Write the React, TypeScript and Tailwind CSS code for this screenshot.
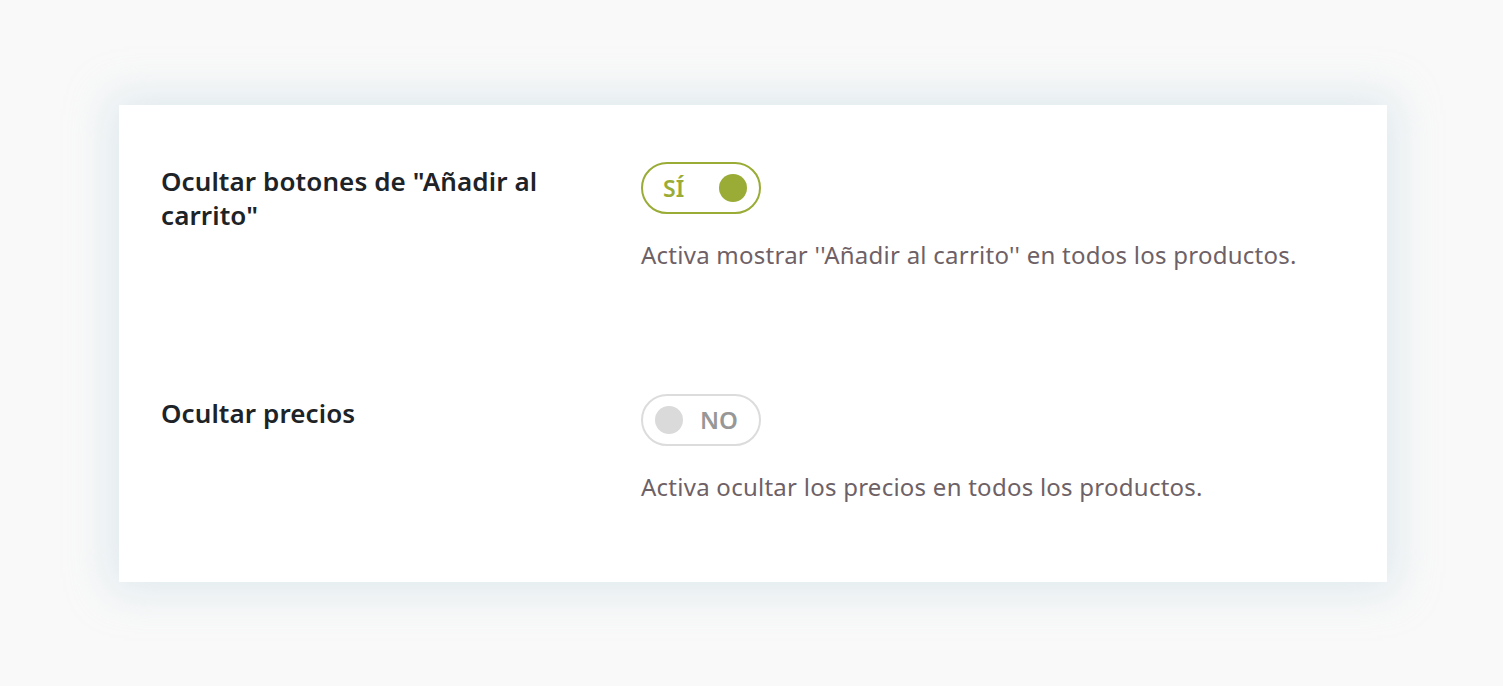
const Toggle = ({ on }: { on: boolean }) =>
  on ? (
    <div className="flex h-[52px] w-[120px] items-center justify-between rounded-full border-2 border-[#9aac36] pl-[20px] pr-[12px]">
      <span className="text-[23px] font-semibold text-[#9aac36]">SÍ</span>
      <span className="h-[28px] w-[28px] rounded-full bg-[#9aac36]" />
    </div>
  ) : (
    <div className="flex h-[52px] w-[120px] items-center justify-between rounded-full border-2 border-[#dcdcdc] pl-[12px] pr-[21px]">
      <span className="h-[28px] w-[28px] rounded-full bg-[#dadada]" />
      <span className="text-[24px] font-semibold text-[#979797]">NO</span>
    </div>
  );

const Row = ({ title, on, desc }: { title: string; on: boolean; desc: string }) => (
  <div className="grid grid-cols-[480px_1fr]">
    <h3 className="w-[420px] pt-[2px] text-[26px] font-semibold leading-[34px] tracking-[0.1px] text-[#1d2327]">{title}</h3>
    <div>
      <Toggle on={on} />
      <p className="mt-[26px] text-[24px] leading-[30px] tracking-[0.25px] text-[#6e6166]">{desc}</p>
    </div>
  </div>
);

export default function App() {
  return (
    <div className="min-h-[686px] bg-[#f9f9f9] pl-[119px] pr-[116px] pt-[105px] pb-[105px]" style={{ fontFamily: '"Noto Sans", sans-serif' }}>
      <div className="flex flex-col gap-[124px] bg-white px-[42px] pt-[57px] pb-[80px] shadow-[0_0_40px_10px_rgba(185,210,220,0.38)]">
        <Row title={'Ocultar botones de "Añadir al carrito"'} on desc={"Activa mostrar ''Añadir al carrito'' en todos los productos."} />
        <Row title="Ocultar precios" on={false} desc="Activa ocultar los precios en todos los productos." />
      </div>
    </div>
  );
}
